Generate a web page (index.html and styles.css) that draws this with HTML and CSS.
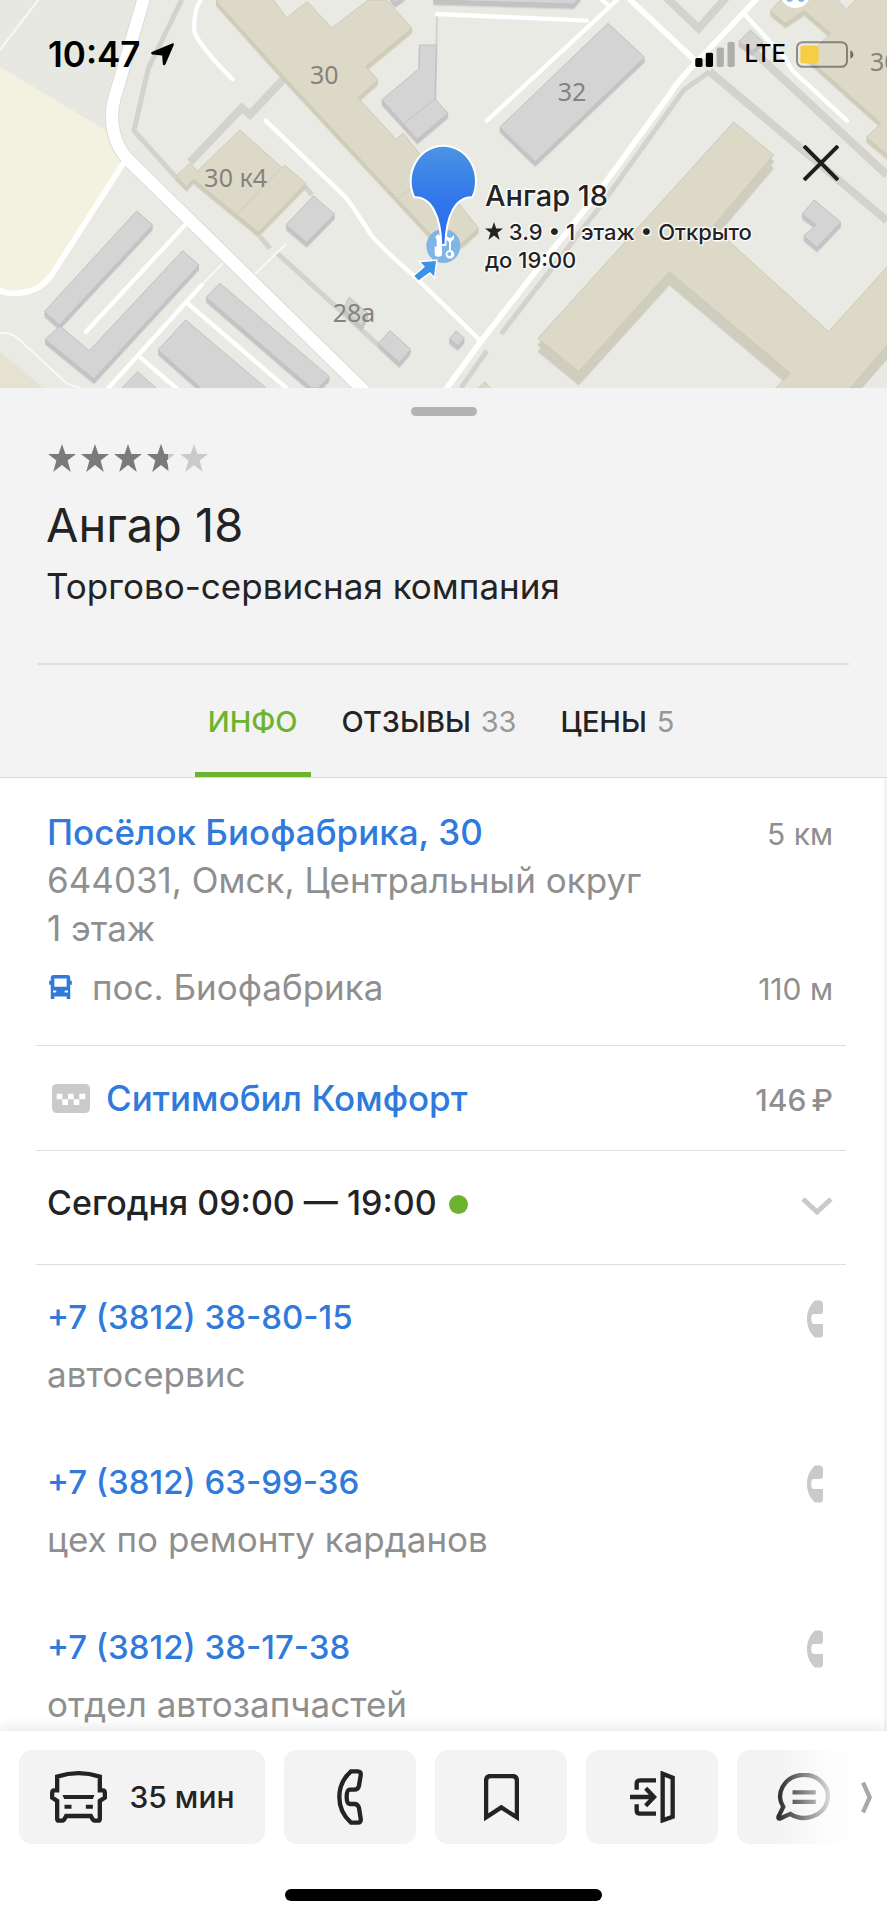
FILE: index.html
```html
<!DOCTYPE html>
<html lang="ru">
<head>
  <meta charset="UTF-8" />
  <meta name="viewport" content="width=device-width, initial-scale=1.0" />
  <title>Ангар 18</title>
  <link rel="stylesheet" href="styles.css">
</head>
<body>

  <svg width="0" height="0" class="defs" aria-hidden="true">
    <symbol id="star" viewBox="0 0 28 28">
      <path d="M14 0 L17.4 10 H28 L19.6 16.6 L22.8 28 L14 21 L5.2 28 L8.4 16.6 L0 10 H10.6 Z" />
    </symbol>
    <symbol id="handset" viewBox="0 0 49 114">
      <path d="M24 0 H38 Q49 0 49 12 V32 Q49 42 40 42 H20 Q13 42 13 57 Q13 72 20 72 H49 V102 Q49 114 38 114 H24 C8 98 0 80 0 57 C0 34 8 16 24 0 Z" />
    </symbol>
  </svg>

  <div class="screen">
    <div class="map">
      <svg class="map-canvas" viewBox="0 0 2661 1164" preserveAspectRatio="xMidYMid slice">
        <!-- ground -->
        <path class="lot" d="M0 0 H433 L335 340 L320 395 L0 200 Z" />
        <path class="field" d="M0 200 L316 390 L345 450 L362 490 L150 830 L90 875 L0 870 Z" />
        <path class="sand" d="M0 1055 L130 1164 H0 Z" />

        <!-- fences -->
        <g class="fence">
          <path d="M545 0 L445 205 L402 392 L535 540" />
          <path d="M850 238 L750 344 L725 324 L570 487" class="wide" />
          <path d="M915 560 L936 585 M780 710 L810 745 M832 760 L1140 1040" />
          <path d="M1311 50 L1306 300" class="thin" />
        </g>
        <g class="fence" transform="translate(1311 0)">
          <path d="M818 215 L740 270 L500 605 L192 1002 M150 1052 L72 1164" />
          <path d="M818 215 L1350 662 M945 150 L1350 525 M685 -10 L785 85 L870 -10" class="wide" />
        </g>

        <!-- roads -->
        <g class="road">
          <path class="thin" d="M115 0 L0 150 M0 1000 H25 Q45 1005 70 1030 L200 1150 L240 1164 M605 855 L668 790 M765 822 L858 732" />
          <path class="casing" d="M433 -10 L342 300 Q330 350 342 400 Q350 440 385 480 L1105 1185" />
          <path class="main" d="M433 -10 L342 300 Q330 350 342 400 Q350 440 385 480 L1105 1185" />
          <path d="M370 490 L155 825 Q115 880 40 880 Q10 880 0 870" class="mid" />
          <path d="M555 675 L258 995 M605 855 L320 1170 M563 910 L866 1170 M418 1070 L535 1170" />
          <path d="M602 0 Q580 30 583 95 Q600 140 698 238 M797 362 L1035 590 Q1060 620 1110 700 Q1130 730 1250 835 L1441 1022" />
        </g>
        <g class="road" transform="translate(1311 0)">
          <path d="M545 -5 L150 362 M0 42 L450 62 M485 -10 L515 18 M920 40 L1045 175 L1065 210 L1230 362" />
          <path d="M580 0 L775 182" class="mid" />
          <path d="M960 -5 L920 38 L775 190 Q725 240 700 280 L500 555 Q460 610 350 745 L135 1020 L25 1170" class="mid" />
        </g>

        <!-- houses -->
        <g class="house beige">
          <path d="M650 -5 H817 L860 53 L922 5 L995 84 L1105 0 H1160 L1236 85 L1097 200 L1134 240 L1074 293 L1188 418 L1210 400 L1376 610 L1436 685 L1386 730 L1290 702 L850 228 L650 5 Z" />
          <path d="M720 390 L845 502 L855 496 L918 550 L775 697 L580 537 L560 560 L528 528 L570 490 L592 513 Z" />
          <path d="M1192 597 L1240 560 M845 502 L714 640" class="seam" />
        </g>
        <g class="house grey">
          <path d="M940 588 L1004 642 L920 728 L858 675 Z" />
          <path d="M410 633 L458 675 L178 975 L133 935 Z" />
          <path d="M548 752 L597 795 L282 1137 L135 1018 L180 978 L268 1052 Z" />
          <path d="M660 850 L988 1130 L955 1164 H935 L618 892 Z" />
          <path d="M557 960 L805 1170 H610 L474 1050 Z" />
          <path d="M413 1115 L475 1170 H360 Z" />
          <path d="M1048 892 L1104 940 L1085 978 L1030 925 Z" />
          <path d="M1170 992 L1232 1048 L1198 1088 L1135 1030 Z" />
          <path d="M1258 135 H1309 L1305 297 L1344 340 L1252 418 L1145 300 L1258 205 Z" />
          <path d="M1305 297 L1213 370" class="seam" />
          <path d="M1170 -10 L1185 8 L1215 -12 Z" />
        </g>
        <g transform="translate(1311 0)">
          <g class="house grey">
            <path d="M-10 -10 H430 L410 12 L-10 0 Z" />
            <path d="M513 70 L623 172 L295 485 L188 382 Z" />
            <path d="M940 90 L978 125 L945 152 L905 125 Z" />
            <path d="M1132 600 L1212 667 L1140 742 L1100 708 L1138 675 L1095 642 Z" />
            <path d="M57 993 L82 1015 L62 1037 L37 1017 Z" />
          </g>
          <g class="house beige">
            <path d="M1040 -10 L1000 33 L1045 70 L1102 32 L1180 100 L1110 172 L1332 370 L1288 412 L1360 472 V-10 H1265 L1228 28 L1192 -10 Z" />
            <path d="M143 1145 L165 1170 H120 Z" />
          </g>
          <g class="house beige tall">
            <path d="M890 366 L1010 465 L827 680 L1175 995 L1360 790 V1025 L1235 1170 H1010 L1060 1120 L697 815 L425 1115 L303 1015 Z" />
          </g>
          <circle cx="1075" cy="-22" r="46" fill="#fff" />
          <path d="M1046 -10 H1072 Q1070 6 1056 6 Q1048 6 1046 -10 Z M1080 -10 H1106 Q1104 6 1092 6 Q1082 6 1080 -10 Z" fill="#83b7e8" />
        </g>

        <g class="house-no">
          <text x="930" y="252">30</text>
          <text x="613" y="560">30 к4</text>
          <text x="998" y="965">28а</text>
          <text x="1673" y="303">32</text>
          <text x="2610" y="214">30</text>
        </g>

        <!-- place marker -->
        <circle cx="1330" cy="738" r="51" fill="#7fb4e6" />
        <g fill="#fff">
          <path d="M1306 710 L1314 702 L1323 710 V735 H1326 V762 Q1326 770 1315 770 Q1304 770 1304 762 V740 H1310 V720 Z" />
          <path d="M1336 704 V716 L1347 726 V750 A13 13 0 1 0 1353 750 V726 L1362 716 V704 L1356 712 L1349 714 L1342 710 Z" />
          <circle cx="1348" cy="762" r="6" fill="#7fb4e6" />
        </g>
        <path class="entry" d="M1243 828 L1275 800 L1262 787 L1308 783 L1302 829 L1290 816 L1256 841 Z" />
        <linearGradient id="pin" x1="0" y1="0" x2="0" y2="1">
          <stop offset="0" stop-color="#4c94e4" />
          <stop offset="0.55" stop-color="#3176ea" />
          <stop offset="1" stop-color="#2f6cf0" />
        </linearGradient>
        <path class="pin" d="M1243 592 A98 106 0 1 1 1417 592 C1365 590 1338 650 1336 735 H1324 C1322 650 1295 590 1243 592 Z" />
      </svg>

      <div class="status">
        <span class="clock">10:47</span>
        <svg class="geo" viewBox="0 0 70 68"><path d="M66 0 Q71 0 69 6 L44 64 Q39 71 36 64 L34 37 L4 34 Q-4 31 4 26 Z" /></svg>
        <svg class="signal" viewBox="0 0 120 76">
          <rect x="0" y="49" width="22" height="27" rx="5" />
          <rect x="32" y="33" width="22" height="43" rx="5" />
          <rect x="65" y="17" width="22" height="59" rx="5" opacity="0.25" />
          <rect x="98" y="0" width="22" height="76" rx="5" opacity="0.25" />
        </svg>
        <span class="network">LTE</span>
        <svg class="battery" viewBox="0 0 174 80">
          <rect x="3" y="3" width="150" height="74" rx="17" fill="none" stroke="#000" stroke-opacity="0.4" stroke-width="6" />
          <rect x="13" y="13" width="55" height="54" rx="8" fill="#f7cd46" />
          <path d="M163 27 Q172 31 172 40 Q172 49 163 53 Z" fill-opacity="0.5" />
        </svg>
      </div>

      <button class="close" aria-label="Закрыть">
        <svg viewBox="0 0 36 36"><path d="M1 1 L35 35 M35 1 L1 35" /></svg>
      </button>

      <div class="marker-label">
        <div class="marker-name">Ангар 18</div>
        <div class="marker-info"><svg><use href="#star" /></svg> 3.9 • 1 этаж • Открыто<br>до 19:00</div>
      </div>
    </div>

    <header class="head">
      <div class="handle"></div>
      <div class="rating" role="img" aria-label="3.9">
        <svg><use href="#star" /></svg>
        <svg><use href="#star" /></svg>
        <svg><use href="#star" /></svg>
        <svg><use href="#star" class="off" /><use href="#star" class="cut" /></svg>
        <svg class="off"><use href="#star" /></svg>
      </div>
      <h1>Ангар 18</h1>
      <p class="kind">Торгово-сервисная компания</p>
      <nav class="tabs">
        <button class="tab active">ИНФО</button>
        <button class="tab">ОТЗЫВЫ <span>33</span></button>
        <button class="tab">ЦЕНЫ <span>5</span></button>
      </nav>
    </header>

    <main class="content">
      <section class="block address">
        <div class="row">
          <a href="#">Посёлок Биофабрика, 30</a>
          <span class="side">5 км</span>
        </div>
        <p>644031, Омск, Центральный округ</p>
        <p>1 этаж</p>
        <div class="row stop">
          <svg class="stop-icon" viewBox="0 0 70 74">
            <path fill-rule="evenodd" d="M12 0 H58 Q65 0 65 8 V18 H70 V30 H65 V74 H54 V66 H16 V74 H5 V30 H0 V18 H5 V8 Q5 0 12 0 Z M16 11 V36 H54 V11 Z M12 48 V54 H22 V48 Z M48 48 V54 H58 V48 Z" />
          </svg>
          <span>пос. Биофабрика</span>
          <span class="side">110 м</span>
        </div>
      </section>

      <section class="block taxi">
        <div class="row">
          <svg class="taxi-icon" viewBox="0 0 114 87">
            <rect width="114" height="87" rx="14" fill="#cacaca" />
            <path fill="#fff" d="M14 29 H31 V46 H48 V29 H65 V46 H82 V29 H100 V46 H82 V63 H65 V46 H48 V63 H31 V46 H14 Z" />
          </svg>
          <a href="#">Ситимобил Комфорт</a>
          <span class="side price">146&thinsp;₽</span>
        </div>
      </section>

      <section class="block hours">
        <div class="row">
          <span class="today">Сегодня 09:00 — 19:00</span>
          <span class="dot"></span>
          <svg class="chevron" viewBox="0 0 32 18"><path d="M2 2 L16 15 L30 2" /></svg>
        </div>
      </section>

      <section class="phones">
        <div class="phone">
          <div>
            <a href="tel:+73812388015">+7 (3812) 38-80-15</a>
            <p>автосервис</p>
          </div>
          <svg class="call"><use href="#handset" /></svg>
        </div>
        <div class="phone">
          <div>
            <a href="tel:+73812639936">+7 (3812) 63-99-36</a>
            <p>цех по ремонту карданов</p>
          </div>
          <svg class="call"><use href="#handset" /></svg>
        </div>
        <div class="phone">
          <div>
            <a href="tel:+73812381738">+7 (3812) 38-17-38</a>
            <p>отдел автозапчастей</p>
          </div>
          <svg class="call"><use href="#handset" /></svg>
        </div>
      </section>
    </main>

    <footer class="bar">
      <div class="actions">
        <button class="action route">
          <svg width="57" height="52" viewBox="0 0 170 156">
            <path d="M21 58 H12 Q6 58 6 66 V80 L21 90 V143 Q21 149 27 149 H37 Q41 149 48 135 H122 Q129 149 133 149 H143 Q149 149 149 143 V90 L164 80 V66 Q164 58 158 58 H149 V17 Q85 -4 21 17 Z" />
            <path class="solid" d="M37 72 H133 L128 84 H42 Z M43 101 H64 V113 H43 Z M107 101 H128 V113 H107 Z" />
          </svg>
          <span>35 мин</span>
        </button>
        <button class="action" aria-label="Позвонить">
          <svg width="26" height="56" viewBox="0 0 78 168">
            <path d="M42 7 H62 Q73 7 71 19 L66 50 Q63 62 52 62 H39 Q29 62 29 84 Q29 105 39 105 H52 Q63 105 66 117 L71 149 Q73 161 62 161 H42 Q7 130 7 84 Q7 38 42 7 Z" />
          </svg>
        </button>
        <button class="action" aria-label="Сохранить">
          <svg width="35" height="47" viewBox="0 0 105 142">
            <path d="M6 131 V20 Q6 6 20 6 H85 Q99 6 99 20 V131 L52 101 Z" />
          </svg>
        </button>
        <button class="action" aria-label="Вход">
          <svg width="45" height="52" viewBox="0 0 135 156">
            <path d="M20 56 V38 Q20 28 30 28 H78 M20 100 V118 Q20 128 30 128 H78 M0 78 H72 M47 52 L72 78 L47 104 M98 8 L128 20 V137 L98 148 Z" />
          </svg>
        </button>
        <button class="action" aria-label="Отзыв">
          <svg width="54" height="48" viewBox="0 0 163 144">
            <path d="M22 102 A72 65 0 1 1 43 123 L13 137 Q5 139 8 130 Z M50 58 H120 M50 87 H120" />
          </svg>
        </button>
      </div>
      <div class="more">
        <svg width="11" height="31" viewBox="0 0 33 93"><path d="M6 2 L26 46 L6 91" /></svg>
      </div>
      <div class="home"></div>
    </footer>
  </div>

</body>
</html>
```

FILE: styles.css
```css
:root {
  --text: #232323;
  --muted: #8f8f8f;
  --link: #2f7adb;
  --green: #6eb32f;
  --panel: #f3f3f3;
  --line: #dedede;
  --icon: #cacaca;
  --font: Inter, "Liberation Sans", sans-serif;
}

* {
  box-sizing: border-box;
}

body {
  margin: 0;
  font-family: var(--font);
  font-size: 35px;
  line-height: 48px;
  color: var(--text);
  background: #fff;
}

h1, p {
  margin: 0;
  font-weight: 400;
}

a {
  color: var(--link);
  font-weight: 500;
  text-decoration: none;
}

button {
  border: none;
  padding: 0;
  background: none;
  font-family: inherit;
  color: inherit;
  cursor: pointer;
}

svg {
  display: block;
  flex: none;
}

.defs {
  position: absolute;
}

.screen {
  display: flex;
  flex-direction: column;
  height: 100vh;
}

/* map */
.map {
  position: relative;
  flex: none;
  height: 388px;
  background: #e9eae4;
  overflow: hidden;
}

.map-canvas {
  width: 100%;
  height: 100%;
}

.lot { fill: #e8e8e3; }
.field { fill: #f3f1df; }
.sand { fill: #e6e2d2; }

.fence path {
  fill: none;
  stroke: #d4d2cc;
  stroke-width: 15;
}

.fence .wide { stroke-width: 24; }
.fence .thin { stroke-width: 6; }

.road path {
  fill: none;
  stroke: #fff;
  stroke-width: 13;
  stroke-linecap: round;
  stroke-linejoin: round;
}

.road .mid { stroke-width: 17; }
.road .thin { stroke-width: 6; stroke: #f8f8f5; }
.road .casing { stroke-width: 42; stroke: #d8d8d6; }
.road .main { stroke-width: 37; }

.house path {
  stroke-width: 3;
}

.beige path {
  fill: #dcd9c8;
  stroke: #cdc9b6;
}

.grey path {
  fill: #d4d4d4;
  stroke: #c0c0c2;
}

.house .seam { fill: none; }

/* hard shadows give the houses their walls */
.beige { filter: drop-shadow(0 7px 0 #cfccba) drop-shadow(0 7px 0 #cfccba); }
.grey { filter: drop-shadow(0 7px 0 #c3c3c6) drop-shadow(0 7px 0 #c3c3c6); }
.tall { filter: drop-shadow(0 20px 0 #cfcdbf) drop-shadow(0 20px 0 #cfcdbf); }

.house-no {
  font-family: "Noto Sans", sans-serif;
  font-size: 75px;
  fill: #87837b;
}

.entry {
  fill: #3c92e6;
  stroke: #fff;
  stroke-width: 9;
  paint-order: stroke;
}

.pin {
  fill: url(#pin);
  stroke: #fff;
  stroke-width: 6;
}

.status {
  position: absolute;
  top: 30px;
  left: 48px;
  right: 33px;
  display: flex;
  align-items: center;
  color: #000;
}

.clock {
  font-weight: 600;
}

.geo {
  width: 23px;
  height: 23px;
  margin-left: 10px;
}

.signal {
  width: 40px;
  height: 25px;
  margin-left: auto;
}

.network {
  margin: 0 10px;
  font-size: 24px;
  font-weight: 500;
}

.battery {
  width: 58px;
  height: 27px;
}

.close {
  position: absolute;
  top: 141px;
  right: 44px;
  padding: 4px;
}

.close svg {
  width: 36px;
  height: 36px;
  fill: none;
  stroke: #1e1e1e;
  stroke-width: 4;
}

.marker-label {
  position: absolute;
  top: 176px;
  left: 485px;
  font-weight: 500;
  text-shadow: 0 0 3px #fff, 0 0 3px #fff, 0 0 3px #fff, 1px 1px 1px #fff, -1px -1px 1px #fff;
}

.marker-name {
  margin-bottom: 2px;
  font-size: 29px;
  line-height: 40px;
}

.marker-info {
  font-size: 22px;
  line-height: 28px;
}

.marker-info svg {
  display: inline-block;
  width: 18px;
  height: 18px;
  fill: var(--text);
}

/* place header */
.head {
  flex: none;
  padding-top: 19px;
  background: var(--panel);
  border-bottom: 1px solid #d9d9d9;
}

.handle {
  width: 66px;
  height: 9px;
  margin: 0 auto 28px;
  border-radius: 5px;
  background: #b3b3b3;
}

.rating {
  display: flex;
  gap: 5px;
  padding-left: 48px;
  fill: #7a7a7a;
}

.rating svg {
  width: 28px;
  height: 28px;
}

.rating .off { fill: var(--icon); }
.rating .cut { clip-path: inset(0 7px 0 0); }

h1 {
  margin-top: 25px;
  padding-left: 46px;
  font-size: 47px;
  line-height: 56px;
}

.kind {
  margin-top: 9px;
  padding-left: 46px;
}

.tabs {
  display: flex;
  justify-content: center;
  gap: 18px;
  height: 114px;
  margin: 53px 38px 0;
  padding-right: 5px;
  border-top: 2px solid var(--line);
}

.tab {
  padding: 0 13px;
  border-top: 5px solid transparent;
  border-bottom: 5px solid transparent;
  font-size: 29px;
  font-weight: 500;
}

.tab span {
  margin-left: 2px;
  font-weight: 400;
  color: #979797;
}

.tab.active {
  color: var(--green);
  border-bottom-color: var(--green);
}

/* details */
.content {
  flex: 1;
  min-height: 0;
  overflow-y: auto;
  scrollbar-width: none;
  padding: 0 38px 0 36px;
  border-right: 3px solid var(--panel);
  color: var(--muted);
}

.block {
  padding: 28px 13px 28px 11px;
  border-bottom: 1px solid var(--line);
}

.row {
  display: flex;
  align-items: baseline;
}

.row svg,
.dot {
  align-self: center;
}

.side {
  margin-left: auto;
  font-size: 30px;
  line-height: 40px;
}

.address {
  padding-top: 30px;
  padding-bottom: 34px;
}

.stop {
  margin-top: 11px;
}

.stop-icon {
  width: 23px;
  height: 24px;
  margin: 0 20px 0 2px;
  fill: var(--link);
}

.taxi-icon {
  width: 38px;
  height: 29px;
  margin: 0 16px 0 5px;
}

.price {
  font-weight: 500;
}

.hours {
  padding-bottom: 37px;
}

.today {
  font-size: 34px;
  font-weight: 500;
  color: var(--text);
}

.dot {
  width: 19px;
  height: 19px;
  margin-top: 3px;
  margin-left: 12px;
  border-radius: 50%;
  background: var(--green);
}

.chevron {
  width: 32px;
  height: 18px;
  margin-top: 6px;
  margin-left: auto;
  fill: none;
  stroke: var(--icon);
  stroke-width: 5;
}

.phones {
  display: flex;
  flex-direction: column;
  gap: 60px;
  padding: 28px 23px 0 11px;
}

.phone {
  display: flex;
  justify-content: space-between;
}

.phone a {
  display: block;
  margin-bottom: 9px;
  font-size: 33px;
}

.call {
  width: 16px;
  height: 38px;
  margin-top: 7px;
  fill: var(--icon);
}

/* bottom bar */
.bar {
  position: relative;
  flex: none;
  padding: 19px 0;
  background: #fff;
  box-shadow: 0 0 16px rgba(0, 0, 0, 0.14);
}

.actions {
  display: flex;
  gap: 19px;
  padding-left: 19px;
  overflow: hidden;
}

.action {
  display: flex;
  flex: none;
  align-items: center;
  justify-content: center;
  width: 132px;
  height: 94px;
  border-radius: 13px;
  background: var(--panel);
}

.action svg {
  fill: none;
  stroke: #232323;
  stroke-width: 13;
}

.action .solid {
  fill: #232323;
  stroke: none;
}

.route {
  gap: 23px;
  width: 246px;
  font-size: 30px;
  font-weight: 500;
}

.more {
  position: absolute;
  top: 19px;
  right: 0;
  display: flex;
  align-items: center;
  justify-content: flex-end;
  width: 112px;
  height: 94px;
  padding-right: 15px;
  background: linear-gradient(to right, rgba(255, 255, 255, 0), rgba(255, 255, 255, 0.85) 50%, #fff 85%);
}

.more svg {
  fill: none;
  stroke: #a8a8a8;
  stroke-width: 13;
}

.home {
  width: 317px;
  height: 12px;
  margin: 45px auto 0;
  border-radius: 6px;
  background: #000;
}
```
